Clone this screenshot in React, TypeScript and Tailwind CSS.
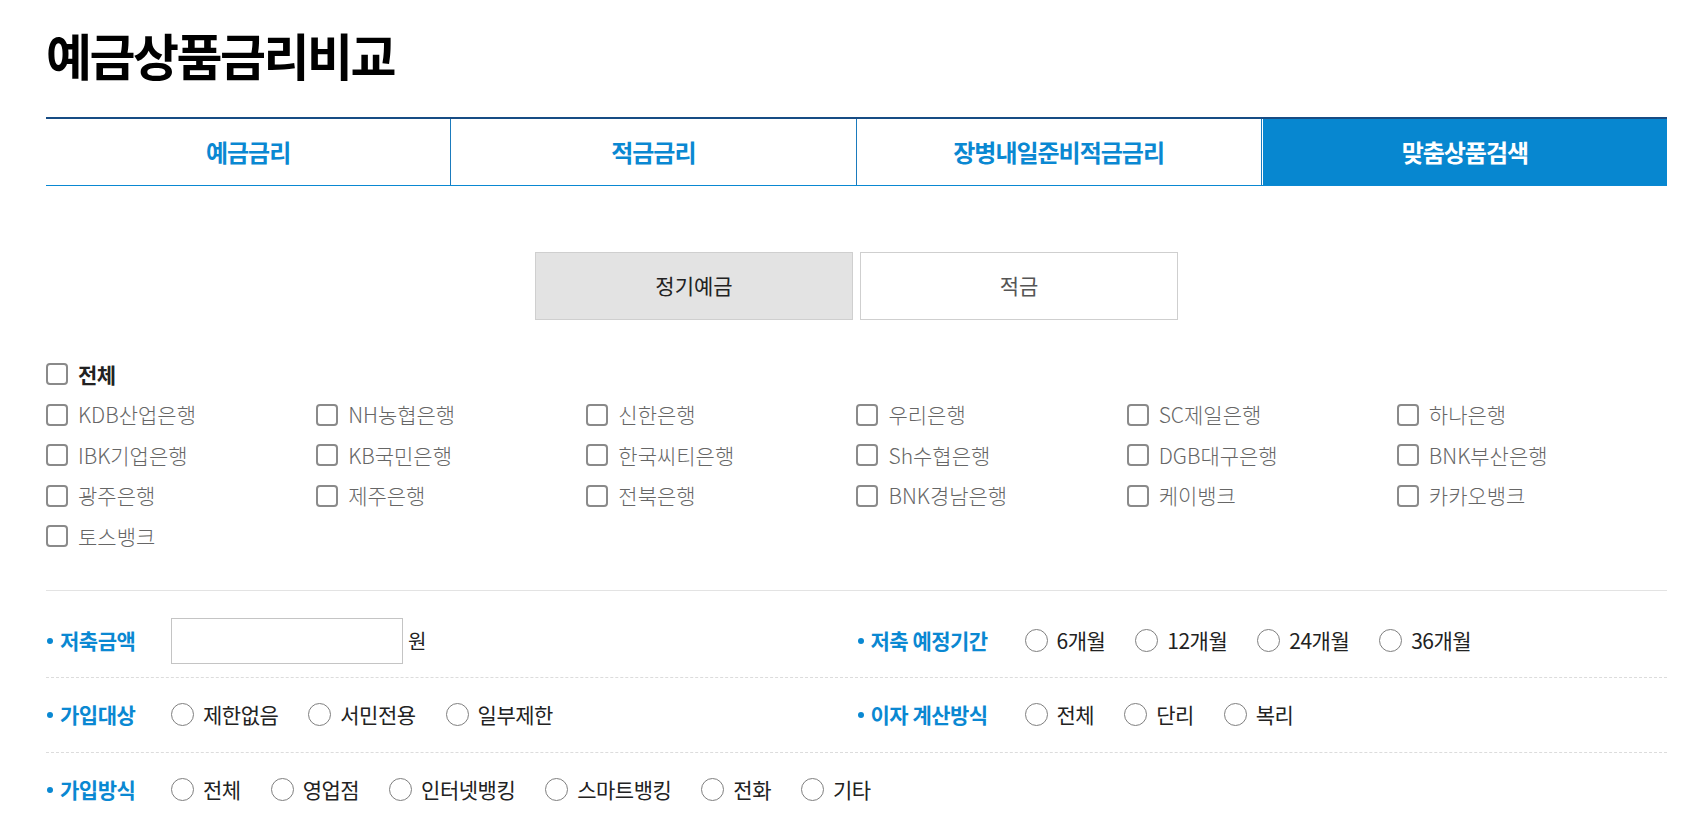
import React from "react";

const banks: string[] = [
  "KDB산업은행", "NH농협은행", "신한은행", "우리은행", "SC제일은행", "하나은행",
  "IBK기업은행", "KB국민은행", "한국씨티은행", "Sh수협은행", "DGB대구은행", "BNK부산은행",
  "광주은행", "제주은행", "전북은행", "BNK경남은행", "케이뱅크", "카카오뱅크",
  "토스뱅크",
];

function CheckBox() {
  return <span className="w-[22px] h-[22px] shrink-0 rounded-[4px] border-2 border-[#8a8a8a] bg-white" />;
}

function Radio({ label }: { label: string }) {
  return (
    <div className="flex items-center gap-[9px]">
      <span className="w-[23px] h-[23px] shrink-0 rounded-full border-[1.5px] border-[#7f7f7f] bg-white" />
      <span className="text-[21px] tracking-[-0.5px] text-[#222]">{label}</span>
    </div>
  );
}

function Label({ text, w }: { text: string; w: string }) {
  return (
    <div className={`flex items-center shrink-0 ${w}`}>
      <span className="w-[6px] h-[6px] rounded-full bg-[#0a88d2] ml-px mr-[7px]" />
      <span className="text-[21px] font-bold tracking-[-0.5px] text-[#0a88d2] whitespace-nowrap">{text}</span>
    </div>
  );
}

function Radios({ items }: { items: string[] }) {
  return (
    <div className="flex items-center gap-[30px]">
      {items.map((r) => (
        <Radio key={r} label={r} />
      ))}
    </div>
  );
}

export default function App() {
  return (
    <div className="min-h-[827px] bg-white font-['Noto_Sans_CJK_KR','Noto_Sans',sans-serif]">
      <div className="ml-[46px] w-[1621px] pt-[29px]">
        <h1 className="text-[50px] leading-none font-bold tracking-[-2.5px] text-black">예금상품금리비교</h1>

        {/* Main tabs */}
        <div className="mt-[38px] flex h-[69px] border-t-2 border-t-[#174c84] border-b border-b-[#0a88d2]">
          <div className="flex-1 flex items-center justify-center text-[24px] font-bold tracking-[-1px] text-[#0a88d2]">예금금리</div>
          <div className="flex-1 flex items-center justify-center border-l border-[#1b7bbd] text-[24px] font-bold tracking-[-1px] text-[#0a88d2]">적금금리</div>
          <div className="flex-1 flex items-center justify-center border-l border-[#1b7bbd] text-[24px] font-bold tracking-[-1px] text-[#0a88d2]">장병내일준비적금금리</div>
          <div className="flex-1 flex border-l border-[#1b7bbd] pl-px">
            <div className="flex-1 flex items-center justify-center bg-[#0787d0] text-[24px] font-bold tracking-[-1px] text-white">맞춤상품검색</div>
          </div>
        </div>

        {/* Sub tabs */}
        <div className="mt-[66px] flex justify-center gap-[7px]">
          <div className="w-[318px] h-[68px] flex items-center justify-center border border-[#cfcfcf] bg-[#e3e3e3] text-[21px] text-[#222]">정기예금</div>
          <div className="w-[318px] h-[68px] flex items-center justify-center border border-[#cfcfcf] bg-white text-[21px] text-[#555]">적금</div>
        </div>

        {/* Banks */}
        <div className="mt-[34px]">
          <div className="h-[40.5px] flex items-center gap-[10px]">
            <CheckBox />
            <span className="text-[21px] font-bold tracking-[-0.5px] text-[#222]">전체</span>
          </div>
          <div className="grid grid-cols-6">
            {banks.map((b) => (
              <div key={b} className="h-[40.5px] flex items-center gap-[10px]">
                <CheckBox />
                <span className="text-[21px] font-light text-[#666]">{b}</span>
              </div>
            ))}
          </div>
        </div>

        {/* Form */}
        <div className="mt-[33px] border-t border-[#e3e3e3]">
          <div className="flex items-center pt-[27px] pb-[13px] border-b border-dashed border-[#dcdcdc]">
            <div className="w-1/2 flex items-center">
              <Label text="저축금액" w="w-[125px]" />
              <div className="w-[232px] h-[46px] border border-[#c4c4c4] bg-white" />
              <span className="ml-[5px] text-[20px] text-[#222]">원</span>
            </div>
            <div className="w-1/2 flex items-center">
              <Label text="저축 예정기간" w="w-[168px]" />
              <Radios items={["6개월", "12개월", "24개월", "36개월"]} />
            </div>
          </div>
          <div className="flex items-center h-[75px] border-b border-dashed border-[#dcdcdc]">
            <div className="w-1/2 flex items-center">
              <Label text="가입대상" w="w-[125px]" />
              <Radios items={["제한없음", "서민전용", "일부제한"]} />
            </div>
            <div className="w-1/2 flex items-center">
              <Label text="이자 계산방식" w="w-[168px]" />
              <Radios items={["전체", "단리", "복리"]} />
            </div>
          </div>
          <div className="flex items-center h-[75px] border-b border-dashed border-[#dcdcdc]">
            <Label text="가입방식" w="w-[125px]" />
            <Radios items={["전체", "영업점", "인터넷뱅킹", "스마트뱅킹", "전화", "기타"]} />
          </div>
        </div>
      </div>
    </div>
  );
}
